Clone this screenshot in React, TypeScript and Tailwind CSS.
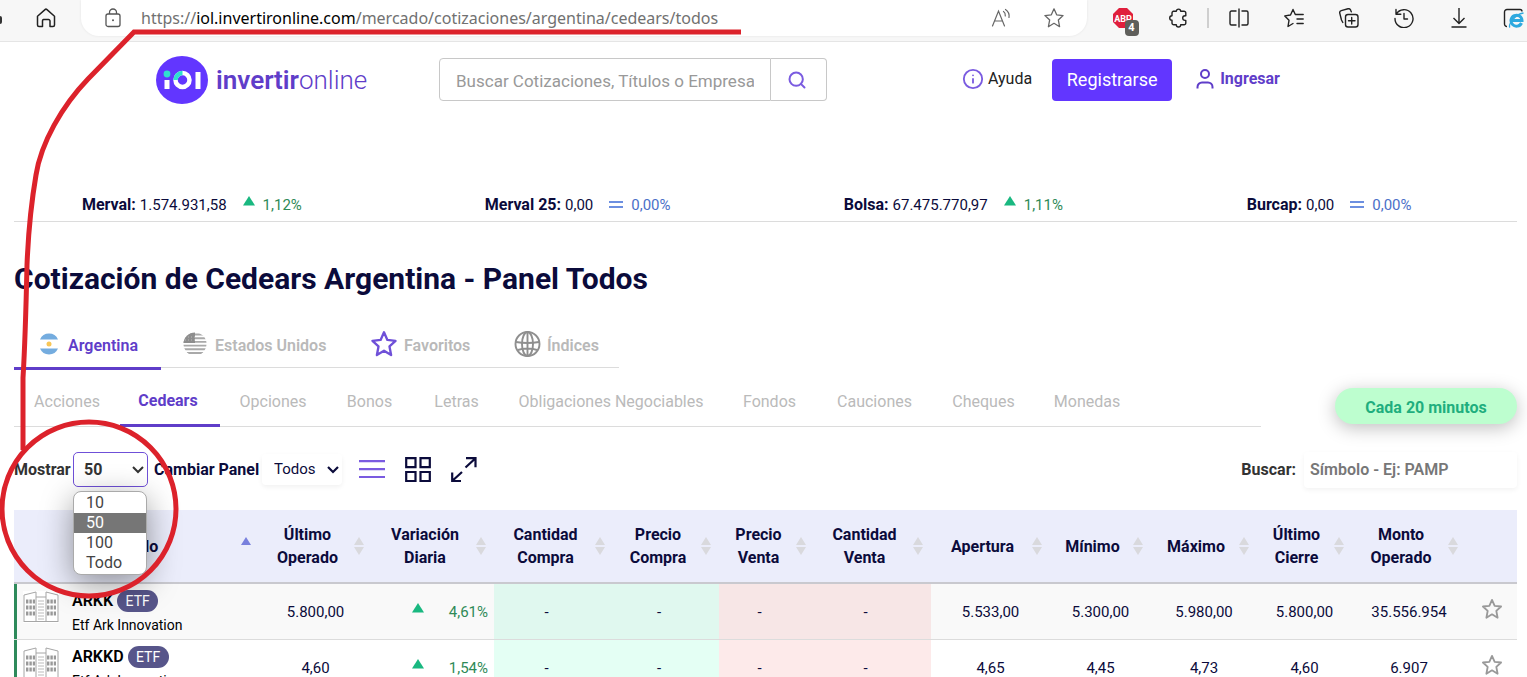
import React, { useState } from 'react';
import { Search, Info } from 'lucide-react';

interface IndexQuote {
  name: string;
  value: string;
  change: string;
  trend: 'up' | 'flat';
  className: string;
}

interface Quote {
  symbol: string;
  type: string;
  description: string;
  last: string;
  change: string;
  open: string;
  low: string;
  high: string;
  close: string;
  volume: string;
}

const INDEXES: IndexQuote[] = [
  { name: 'Merval:', value: '1.574.931,58', change: '1,12%', trend: 'up', className: 'pr-5' },
  { name: 'Merval 25:', value: '0,00', change: '0,00%', trend: 'flat', className: '' },
  { name: 'Bolsa:', value: '67.475.770,97', change: '1,11%', trend: 'up', className: '' },
  { name: 'Burcap:', value: '0,00', change: '0,00%', trend: 'flat', className: '' },
];

const PANELS = [
  { label: 'Acciones', width: 'w-[106px]' },
  { label: 'Cedears', width: 'w-[100px]' },
  { label: 'Opciones', width: 'w-[106px]' },
  { label: 'Bonos', width: 'w-[87px]' },
  { label: 'Letras', width: 'w-[87px]' },
  { label: 'Obligaciones Negociables', width: 'w-[222px]' },
  { label: 'Fondos', width: 'w-[95px]' },
  { label: 'Cauciones', width: 'w-[115px]' },
  { label: 'Cheques', width: 'w-[103px]' },
  { label: 'Monedas', width: 'w-[104px]' },
];

const COLUMNS = [
  { label: 'Instrumento', text: 'Símbolo', width: 'w-[245px]' },
  { label: 'last', text: 'Último Operado', width: 'w-[113px]' },
  { label: 'change', text: 'Variación Diaria', width: 'w-[122px]' },
  { label: 'bidSize', text: 'Cantidad Compra', width: 'w-[119px]' },
  { label: 'bid', text: 'Precio Compra', width: 'w-[106px]' },
  { label: 'ask', text: 'Precio Venta', width: 'w-[95px]' },
  { label: 'askSize', text: 'Cantidad Venta', width: 'w-[117px]' },
  { label: 'open', text: 'Apertura', width: 'w-[119px]' },
  { label: 'low', text: 'Mínimo', width: 'w-[101px]' },
  { label: 'high', text: 'Máximo', width: 'w-[106px]' },
  { label: 'close', text: 'Último Cierre', width: 'w-[95px]' },
  { label: 'volume', text: 'Monto Operado', width: 'w-[114px]' },
];

const QUOTES: Quote[] = [
  {
    symbol: 'ARKK', type: 'ETF', description: 'Etf Ark Innovation', last: '5.800,00', change: '4,61%',
    open: '5.533,00', low: '5.300,00', high: '5.980,00', close: '5.800,00', volume: '35.556.954',
  },
  {
    symbol: 'ARKKD', type: 'ETF', description: 'Etf Ark Innovation', last: '4,60', change: '1,54%',
    open: '4,65', low: '4,45', high: '4,73', close: '4,60', volume: '6.907',
  },
];

const PAGE_SIZES = ['10', '50', '100', 'Todo'];

const StarIcon = ({ className, width = 1.5 }: { className: string; width?: number }) => (
  <svg viewBox="0 0 24 24" fill="none" stroke="currentColor" strokeWidth={width} strokeLinejoin="round" className={className}>
    <path d="M12 2l2.900 6.500 7 .8-5.200 4.800 1.400 7.400L12 17.800 5.900 21.500l1.400-7.400L2.100 9.300l7-.8z" />
  </svg>
);

const UpIcon = () => (
  <svg viewBox="0 0 12 10" className="w-3 h-2.5 text-[#19b880]">
    <path d="M6 0l6 9.500H0z" fill="currentColor" />
  </svg>
);

const ToolbarButton = ({ label, children }: { label: string; children: React.ReactNode }) => (
  <button type="button" aria-label={label} className="w-[55px] h-9 shrink-0 flex items-center justify-center text-[#222]">
    {children}
  </button>
);

const BrowserBar = () => (
  <div className="h-[42px] bg-[#f7f7f7] border-b border-[#e5e5e5] flex items-start overflow-hidden">
    <span className="w-[2px] h-2 mt-4 bg-[#333] rounded-r shrink-0" />
    <button type="button" aria-label="Inicio" className="w-[79px] pl-2 h-9 shrink-0 flex items-center justify-center text-[#222]">
      <svg viewBox="0 0 20 20" fill="none" stroke="currentColor" strokeWidth="1.500" strokeLinejoin="round" className="w-5 h-5">
        <path d="M1.500 8.200L9 1.600a1.500 1.500 0 0 1 2 0l7.500 6.600V17a1.500 1.500 0 0 1-1.500 1.500h-3V13a1.500 1.500 0 0 0-1.500-1.500h-5A1.500 1.500 0 0 0 6.500 13v5.500h-3.500A1.500 1.500 0 0 1 1.500 17z" />
      </svg>
    </button>
    <div className="flex-1 min-w-0 h-9 bg-white rounded-b-[18px] flex items-center shadow-[0_0_3px_rgba(0,0,0,0.08)]">
      <svg viewBox="0 0 16 20" fill="none" stroke="#555" strokeWidth="1.300" className="w-4 h-5 ml-6 mr-5 shrink-0">
        <rect x="1" y="6" width="14" height="12.500" rx="2" />
        <path d="M4.500 6V4.500a3.500 3.500 0 0 1 7 0V6" />
        <circle cx="8" cy="12.300" r="1" fill="#555" stroke="none" />
      </svg>
      <div className="flex-1 font-['Noto_Sans','Open_Sans',sans-serif] text-base leading-9 text-[#717171] whitespace-nowrap">
        https://<span className="text-black">iol.invertironline.com</span>/mercado/cotizaciones/argentina/cedears/todos
      </div>
      <button type="button" aria-label="Leer en voz alta" className="w-12 flex justify-center text-[#666]">
        <svg viewBox="0 0 20 20" fill="none" stroke="currentColor" strokeWidth="1.200" strokeLinecap="round" className="w-5 h-5">
          <path d="M1.500 18L7.500 3l6 15M3.500 13h8M12.500 3.500c1.500 1 2 2.500 1.800 4.500M14.500 1.500c3 2 4 5 3.500 8" />
        </svg>
      </button>
      <button type="button" aria-label="Agregar a favoritos" className="w-[62px] flex justify-center text-[#666] pr-1">
        <StarIcon className="w-[22px] h-[22px]" width={1.4} />
      </button>
    </div>
    <div className="flex items-center pl-2 -mr-[14px]">
      <ToolbarButton label="Adblock Plus">
        <span className="relative">
          <svg viewBox="0 0 20 20" className="w-5 h-5">
            <path d="M6 0h8l6 6v8l-6 6H6l-6-6V6z" fill="#e01f3d" />
            <text x="10" y="13.500" textAnchor="middle" fontSize="9" fontWeight="700" fill="#fff" fontFamily="Roboto, sans-serif">ABP</text>
          </svg>
          <span className="absolute left-3 top-3 w-[14px] h-4 rounded bg-[#5f5f5b] text-white text-[11px] leading-4 font-bold text-center">4</span>
        </span>
      </ToolbarButton>
      <ToolbarButton label="Extensiones">
        <svg viewBox="0 0 20 20" fill="none" stroke="currentColor" strokeWidth="1.400" strokeLinejoin="round" className="w-5 h-5">
          <path d="M5 3.300h3.300a2.200 2.200 0 0 1 4.400 0H16a1.800 1.800 0 0 1 1.800 1.800v2.700h-.8a2.300 2.300 0 0 0 0 4.600h.8V15A1.800 1.800 0 0 1 16 16.800h-3.300a2.200 2.200 0 0 1-4.400 0H5.800A1.800 1.800 0 0 1 4 15v-2.700a2.300 2.300 0 0 1 0-4.600V5a1.800 1.800 0 0 1 1-1.700z" />
        </svg>
      </ToolbarButton>
      <span className="w-[2px] h-5 bg-[#cfcfcf] mx-0.5" />
      <ToolbarButton label="Pantalla dividida">
        <svg viewBox="0 0 20 20" fill="none" stroke="currentColor" strokeWidth="1.400" strokeLinejoin="round" className="w-5 h-5">
          <path d="M10 .5v19M7.500 3H2.500A1.500 1.500 0 0 0 1 4.500v11A1.500 1.500 0 0 0 2.500 17h5M12.500 3h5A1.500 1.500 0 0 1 19 4.500v11a1.500 1.500 0 0 1-1.500 1.500h-5" />
        </svg>
      </ToolbarButton>
      <ToolbarButton label="Favoritos">
        <svg viewBox="0 0 20 20" fill="none" stroke="currentColor" strokeWidth="1.400" strokeLinejoin="round" strokeLinecap="round" className="w-5 h-5">
          <path d="M9 15.500L4 18.500l1-6.200L.8 7.900l5.700-.9L9 1.500l2.300 5h7.900M13 11h6.200M13 15.500h6.200" />
        </svg>
      </ToolbarButton>
      <ToolbarButton label="Colecciones">
        <svg viewBox="0 0 20 20" fill="none" stroke="currentColor" strokeWidth="1.400" strokeLinejoin="round" strokeLinecap="round" className="w-5 h-5">
          <rect x="6.500" y="6.500" width="12.500" height="12.500" rx="2.500" />
          <path d="M12.700 9.500v6.500M9.500 12.700H16M3.800 14.500L2.500 12 .8 5.300a2.200 2.200 0 0 1 1.500-2.700L9 .8a2.200 2.200 0 0 1 2.700 1.500l.6 1.500" />
        </svg>
      </ToolbarButton>
      <ToolbarButton label="Historial">
        <svg viewBox="0 0 20 20" fill="none" stroke="currentColor" strokeWidth="1.400" strokeLinejoin="round" strokeLinecap="round" className="w-5 h-5">
          <path d="M2 1.500v4.800h4.800M2.300 6A9 9 0 1 1 1 10.500M10 5.500V11h3.500" />
        </svg>
      </ToolbarButton>
      <ToolbarButton label="Descargas">
        <svg viewBox="0 0 20 20" fill="none" stroke="currentColor" strokeWidth="1.400" strokeLinejoin="round" className="w-5 h-5">
          <path d="M10 0v15M4.500 10L10 15.500l5.500-5.500M2.500 19h15" />
        </svg>
      </ToolbarButton>
      <ToolbarButton label="Modo Internet Explorer">
        <svg viewBox="0 0 22 20" className="w-[22px] h-5">
          <path d="M4 18.500A2.500 2.500 0 0 1 1.500 16V4A2.500 2.500 0 0 1 4 1.500h13a2 2 0 0 1 2 2" fill="none" stroke="currentColor" strokeWidth="1.400" />
          <path d="M18.500 15A5.500 5.500 0 1 1 19 12.500H8.500" fill="none" stroke="#2ea9df" strokeWidth="3" />
          <path d="M7 19.500c-2-2 4-13 13.500-14.500" fill="none" stroke="#2ea9df" strokeWidth="1.300" />
        </svg>
      </ToolbarButton>
    </div>
  </div>
);

const Header = () => (
  <header className="h-[146px] pt-4 flex items-start">
    <a href="#" className="ml-[156px] mt-[-2px] w-[283px] flex items-center gap-2 text-[#5f3dc9]">
      <svg viewBox="0 0 52 48" className="w-[52px] h-12">
        <ellipse cx="26" cy="24" rx="26" ry="24" fill="#6236ff" />
        <circle cx="11" cy="18" r="3.400" fill="#2fe0cf" />
        <path d="M11 24v9M42 16v17" stroke="#fff" strokeWidth="5" />
        <circle cx="26.500" cy="24" r="7" fill="none" stroke="#fff" strokeWidth="4.500" />
        <path d="M19.500 24a7 7 0 0 1 7-7" fill="none" stroke="#2fe0cf" strokeWidth="4.500" />
      </svg>
      <span className="text-[26px] leading-8"><b className="font-semibold">invertir</b><span className="font-light">online</span></span>
    </a>
    <form className="flex w-[388px] h-[43px]" onSubmit={(e) => e.preventDefault()}>
      <input
        type="text"
        aria-label="Buscar cotizaciones"
        placeholder="Buscar Cotizaciones, Títulos o Empresas"
        className="flex-1 min-w-0 border border-[#c8c8c8] rounded-l px-4 pt-1 text-[17px] placeholder:text-[#999]"
      />
      <button type="submit" aria-label="Buscar" className="w-14 border border-l-0 border-[#c8c8c8] rounded-r flex items-center justify-center text-[#7a5be0] pr-1">
        <Search className="w-5 h-5" strokeWidth={2.4} />
      </button>
    </form>
    <a href="#" className="ml-[135px] h-[42px] flex items-center gap-1 text-base text-[#222]">
      <Info className="w-[22px] h-[22px] text-[#7a5be0]" />
      Ayuda
    </a>
    <button type="button" className="ml-5 mt-px w-[120px] h-[42px] rounded bg-[#6236ff] text-white text-lg">Registrarse</button>
    <a href="#" className="ml-6 h-[42px] flex items-center gap-[6px] text-base font-bold text-[#5f3dc9]">
      <svg viewBox="0 0 18 20" fill="none" stroke="currentColor" strokeWidth="2" className="w-[18px] h-5">
        <circle cx="9" cy="5" r="4" />
        <path d="M1.500 19.500V18a4.500 4.500 0 0 1 4.500-4.500h6a4.500 4.500 0 0 1 4.500 4.500v1.500" />
      </svg>
      Ingresar
    </a>
  </header>
);

const IndexTicker = () => (
  <div className="h-[34px] border-b border-[#dcdcdc] grid grid-cols-4">
    {INDEXES.map((item) => (
      <div key={item.name} className={`h-[34px] flex items-center justify-center text-[15px] text-[#0b0b3b] whitespace-nowrap ${item.className}`}>
        <b className="mr-1 text-base">{item.name}</b>
        <span>{item.value}</span>
        <span className="ml-4 mr-2 pb-2">
          {item.trend === 'up' ? <UpIcon /> : (
            <svg viewBox="0 0 14 8" className="w-[14px] h-2 mt-2"><path d="M0 1h14M0 6h14" stroke="#6c8fe0" strokeWidth="2" /></svg>
          )}
        </span>
        <span className={item.trend === 'up' ? 'text-[#2f8a57]' : 'text-[#4b6fc8]'}>{item.change}</span>
      </div>
    ))}
  </div>
);

const CountryTabs = () => (
  <nav className="h-[52px] w-[605px] flex text-base font-semibold text-[#b9b9b9] border-b border-[#dcdcdc]">
    <a href="#" className="w-[147px] h-[54px] pt-2 pl-6 flex items-center gap-2 text-[#5f3dc9] border-b-3 border-[#5f3dc9]">
      <svg viewBox="0 0 22 22" className="w-[22px] h-[22px] mb-1">
        <path d="M2 6.500a9.800 9.800 0 0 1 18 0z" fill="#74acdf" />
        <path d="M2 15.500h18a9.800 9.800 0 0 1-18 0z" fill="#74acdf" />
        <circle cx="11" cy="11" r="2.500" fill="#f8c657" />
      </svg>
      Argentina
    </a>
    <a href="#" className="w-[188px] pt-2 pl-[22px] flex items-center gap-2">
      <svg viewBox="0 0 24 24" className="w-6 h-6 mb-1">
        <clipPath id="us"><circle cx="12" cy="12" r="11.500" /></clipPath>
        <g clipPath="url(#us)" stroke="#a9a9a9" strokeWidth="1.900">
          <path d="M0 2.500h24M0 6.200h24M0 9.900h24M0 13.600h24M0 17.300h24M0 21h24" />
          <path d="M0 0h12v11H0z" fill="#8d8d8d" stroke="none" />
          <path d="M2 5h10M2 8h10" stroke="#b9b9b9" strokeDasharray="1 2" strokeWidth="1" />
        </g>
      </svg>
      Estados Unidos
    </a>
    <a href="#" className="w-[145px] pt-2 pl-[21px] flex items-center gap-[6px]">
      <StarIcon className="w-7 h-7 mb-1 text-[#6f50d8]" width={2} />
      Favoritos
    </a>
    <a href="#" className="pt-2 pl-5 flex items-center gap-[6px]">
      <svg viewBox="0 0 26 26" fill="none" stroke="#8f8f8f" strokeWidth="1.900" className="w-[27px] h-[26px] mb-1">
        <circle cx="13" cy="13" r="12" />
        <ellipse cx="13" cy="13" rx="5.500" ry="12" />
        <path d="M13 1v24M1.500 11c6 1 17 1 23 0M3.500 19c5-2 14-2 19 0" />
      </svg>
      Índices
    </a>
  </nav>
);

const PanelTabs = () => (
  <div className="flex items-start justify-between">
    <nav className="mt-[6px] h-[53px] w-[1247px] flex border-b border-[#dcdcdc] text-base text-[#bababa]">
      {PANELS.map((panel) => (
        <a
          key={panel.label}
          href="#"
          className={`${panel.width} h-[53px] flex items-center justify-center whitespace-nowrap ${
            panel.label === 'Cedears' ? 'text-[#5f3dc9] font-bold pt-1 pr-1 border-b-3 border-[#5f3dc9]' : 'pt-0.5'
          }`}
        >
          {panel.label}
        </a>
      ))}
    </nav>
    <button type="button" className="mt-5 w-[182px] h-9 pt-1 rounded-full bg-[#bdfecf] text-[#1fae7e] text-base font-bold shadow-[0_4px_18px_rgba(0,0,0,0.25)]">
      Cada 20 minutos
    </button>
  </div>
);

interface ControlsProps {
  pageSize: string;
  onChangePageSize: (size: string) => void;
}

const Controls: React.FC<ControlsProps> = ({ pageSize, onChangePageSize }) => (
  <div className="mt-[25px] h-[35px] flex items-center text-base text-[#0b0b3b]">
    <label htmlFor="page-size" className="w-[59px] font-bold text-[#333]">Mostrar</label>
    <div className="relative w-[75px] h-[35px] shrink-0">
      <select
        id="page-size"
        value={pageSize}
        onChange={(e) => onChangePageSize(e.target.value)}
        className="appearance-none w-full h-full border border-[#6f50d8] rounded-[5px] pl-[10px] bg-white font-bold text-[#333]"
      >
        {PAGE_SIZES.map((size) => <option key={size} value={size}>{size}</option>)}
      </select>
      <svg viewBox="0 0 12 8" fill="none" stroke="#333" strokeWidth="2" className="absolute right-1 top-3.5 w-3 h-2 pointer-events-none"><path d="M1 1l5 5 5-5" /></svg>
      <ul role="listbox" className="absolute left-0 top-[39px] z-10 w-[74px] h-[84px] bg-white border border-[#aaa] rounded-lg overflow-hidden shadow-[0_8px_32px_rgba(0,0,0,0.4)] text-[#444] leading-5 pt-[1px]">
        {PAGE_SIZES.map((size) => (
          <li
            key={size}
            role="option"
            aria-selected={size === pageSize}
            onClick={() => onChangePageSize(size)}
            className={`pl-3 ${size === pageSize ? 'bg-[#767676] text-white' : ''}`}
          >
            {size}
          </li>
        ))}
      </ul>
    </div>
    <label htmlFor="panel" className="w-[110px] pl-[6px] font-bold whitespace-nowrap">Cambiar Panel</label>
    <div className="relative w-[80px] ml-1 h-[31px] rounded shadow-[0_2px_5px_rgba(0,0,0,0.06)]">
      <select id="panel" className="appearance-none w-full h-full pl-3 bg-transparent text-[15px]">
        <option>Todos</option>
      </select>
      <svg viewBox="0 0 12 8" fill="none" stroke="currentColor" strokeWidth="2.200" className="absolute right-[3px] top-3 w-3 h-2 pointer-events-none"><path d="M1 1l5 5 5-5" /></svg>
    </div>
    <button type="button" aria-label="Vista de lista" className="ml-[17px]">
      <svg viewBox="0 0 26 20" stroke="#7a5be0" strokeWidth="2.200" className="w-[26px] h-5"><path d="M0 1.200h26M0 9.200h26M0 17h26" /></svg>
    </button>
    <button type="button" aria-label="Vista de grilla" className="ml-5">
      <svg viewBox="0 0 26 26" fill="none" stroke="currentColor" strokeWidth="2.200" className="w-[26px] h-[26px]">
        <path d="M1.200 1.200h9.300v9H1.200zM15.500 1.200h9.300v9h-9.300zM1.200 15h9.300v9H1.200zM15.500 15h9.300v9h-9.300z" />
      </svg>
    </button>
    <button type="button" aria-label="Pantalla completa" className="ml-5">
      <svg viewBox="0 0 26 26" fill="none" stroke="currentColor" strokeWidth="2.200" className="w-[26px] h-[26px]">
        <path d="M15 1.200h9.500v9M24.500 1.200L14.500 10.500M1.200 15.500V24H10M1.200 24L11 15" />
      </svg>
    </button>
    <label htmlFor="symbol" className="ml-auto mr-2 font-bold text-[#333]">Buscar:</label>
    <input
      id="symbol"
      type="search"
      placeholder="Símbolo - Ej: PAMP"
      className="w-[213px] h-9 rounded px-[6px] font-semibold placeholder:text-[#777] shadow-[0_2px_5px_rgba(0,0,0,0.05)]"
    />
  </div>
);

const SortIcon = ({ active }: { active: boolean }) => (
  <svg viewBox="0 0 10 20" className="w-[10px] h-5 shrink-0">
    <path d="M5 1l5 8H0z" fill={active ? '#7880dd' : '#d9d9dd'} />
    {!active && <path d="M5 19l5-8H0z" fill="#d9d9dd" />}
  </svg>
);

const BuildingIcon = () => (
  <svg viewBox="0 0 36 32" fill="none" stroke="#a6a6a6" className="w-9 h-8 bg-white shrink-0">
    <path d="M1 30V4l12-3v29M35 30V4L23 1v29M13 6h10M.5 30.500h35" />
    <path d="M3 10.500h9M3 16.500h9M3 22.500h9M24 10.500h9M24 16.500h9M24 22.500h9" stroke="#999" strokeWidth="4" strokeDasharray="2.400 1" />
    <path d="M16 9v21M18 9v21M20 9v21" stroke="#bbb" strokeDasharray="2 1" />
  </svg>
);

const QuoteRow = ({ quote, index }: { quote: Quote; index: number }) => {
  const even = index % 2 === 0;
  const buy = even ? 'bg-[#e0f8ef]' : 'bg-[#e4fff4]';
  const sell = even ? 'bg-[#f7e6e6]' : 'bg-[#fdeaea]';

  return (
    <tr className={`h-14 text-[15px] border-b border-[#dcdcdc] ${even ? 'bg-[#f9f9f9]' : 'bg-white'}`}>
      <td className="shadow-[inset_3px_0_0_#2e8a5b] p-0 pt-[3px] pl-[9px]">
        <div className="flex gap-[13px]">
          <span className="pt-0.5"><BuildingIcon /></span>
          <div className="text-black">
            <div className="flex items-center gap-1 h-6">
              <b className="text-base font-semibold">{quote.symbol}</b>
              <span className="w-[41px] h-[22px] rounded-full bg-[#57558a] text-white text-sm leading-[22px]">{quote.type}</span>
            </div>
            <div className="h-6 text-sm leading-6 text-left">{quote.description}</div>
          </div>
        </div>
      </td>
      <td className="p-0 pt-0.5">{quote.last}</td>
      <td className="p-0 pt-0.5 pl-10 pr-[6px]">
        <div className="flex items-center justify-between text-[#2f8a57]">
          <span className="pb-2"><UpIcon /></span>
          {quote.change}
        </div>
      </td>
      <td className={`p-0 pt-0.5 pr-[14px] ${buy}`}>-</td>
      <td className={`p-0 pt-0.5 pr-[14px] ${buy}`}>-</td>
      <td className={`p-0 pt-0.5 pr-[14px] ${sell}`}>-</td>
      <td className={`p-0 pt-0.5 pr-[14px] ${sell}`}>-</td>
      <td className="p-0 pt-0.5">{quote.open}</td>
      <td className="p-0 pt-0.5">{quote.low}</td>
      <td className="p-0 pt-0.5">{quote.high}</td>
      <td className="p-0 pt-0.5">{quote.close}</td>
      <td className="p-0 pt-0.5">{quote.volume}</td>
      <td className="p-0 pb-1">
        <button type="button" aria-label="Agregar a favoritos" className="block mx-auto text-[#999]">
          <StarIcon className="w-[22px] h-[22px]" width={2} />
        </button>
      </td>
    </tr>
  );
};

const QuotesTable = () => (
  <table className="mt-[23px] w-full table-fixed border-collapse text-center text-base text-[#0b0b3b]">
    <thead>
      <tr className="h-[73px] bg-[#ebedfb] border-b-2 border-[#c9c9cf]">
        {COLUMNS.map((column, i) => (
          <th key={column.label} className={`${column.width} p-0 font-bold leading-[23px]`}>
            <div className="flex items-center pl-0.5 pr-2">
              <span className="flex-1">{column.text}</span>
              <SortIcon active={i === 0} />
            </div>
          </th>
        ))}
        <th className="w-[51px] p-0" aria-label="Favorito" />
      </tr>
    </thead>
    <tbody>
      {QUOTES.map((quote, index) => <QuoteRow key={quote.symbol} quote={quote} index={index} />)}
    </tbody>
  </table>
);

// hand-drawn marker lines laid over the page
const Annotation = () => (
  <svg viewBox="0 0 760 620" fill="none" stroke="#dc222b" strokeWidth="5" className="absolute left-0 top-0 z-20 w-[760px] h-[620px] pointer-events-none">
    <path d="M741 32H134L88 79C62 106 41 143 36 175C30 210 28 240 27 265C26 310 25 345 23 378V450" />
    <ellipse cx="89" cy="509" rx="87" ry="87" />
  </svg>
);

const App: React.FC = () => {
  const [pageSize, setPageSize] = useState('50');

  return (
    <div className="relative h-screen overflow-hidden bg-white font-['Roboto',sans-serif]">
      <BrowserBar />
      <Header />
      <main className="pl-[14px] pr-[10px]">
        <IndexTicker />
        <h1 className="mt-9 h-[42px] text-[30px] leading-[42px] font-bold text-[#0b0b3b]">
          Cotización de Cedears Argentina - Panel Todos
        </h1>
        <div className="mt-4">
          <CountryTabs />
          <PanelTabs />
        </div>
        <Controls pageSize={pageSize} onChangePageSize={setPageSize} />
        <QuotesTable />
      </main>
      <Annotation />
    </div>
  );
};

export default App;
